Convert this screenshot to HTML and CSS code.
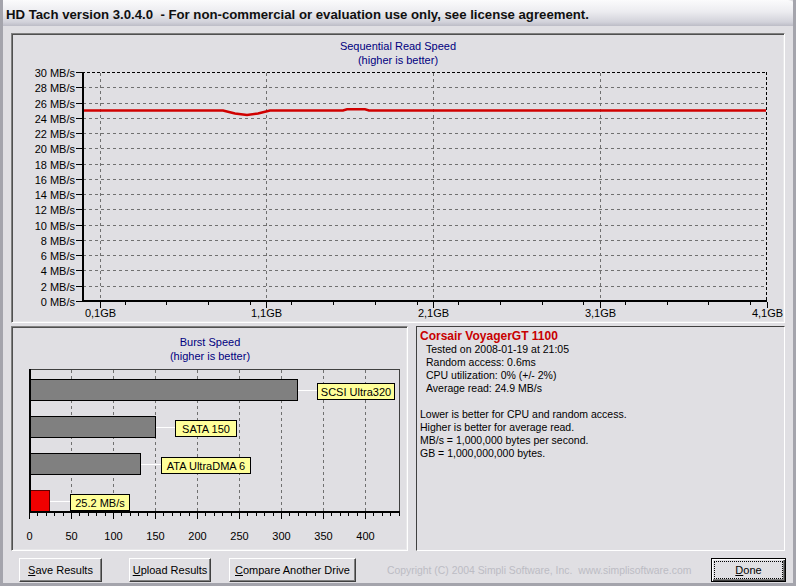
FILE: index.html
```html
<!DOCTYPE html>
<html lang="en">
<head>
    <meta charset="UTF-8">
    <title>HD Tach</title>
    <link rel="stylesheet" href="styles.css">
</head>
<body>
<div class="window">
    <div class="titlebar">HD Tach version 3.0.4.0 &nbsp;- For non-commercial or evaluation use only, see license agreement.</div>
    <div class="client">

        <div class="panel seq">
            <svg width="770" height="286" viewBox="0 0 770 286">
                <text class="ctitle" x="385" y="15">Sequential Read Speed</text>
                <text class="ctitle" x="385" y="29">(higher is better)</text>
                <g id="seq-grid"></g>
                <g id="seq-labels" class="axis"></g>
                <polyline class="readline" points="69,75.5 210,75.5 222,78.5 234,80 245,78.5 257,75.5 330,75.5 334,74.3 352,74.3 356,75.5 753,75.5"/>
                <line class="frame-top" x1="69" y1="37.5" x2="753" y2="37.5"/>
                <line class="frame-top" x1="753.5" y1="37" x2="753.5" y2="266"/>
                <line class="axisline" x1="70" y1="37" x2="70" y2="267"/>
                <line class="axisline" x1="69" y1="266" x2="754" y2="266"/>
            </svg>
        </div>

        <div class="row">
            <div class="panel burst">
                <svg width="393" height="221" viewBox="0 0 393 221">
                    <text class="ctitle" x="197" y="18">Burst Speed</text>
                    <text class="ctitle" x="197" y="32">(higher is better)</text>
                    <g id="burst-grid"></g>
                    <line class="boxline" x1="16" y1="41.5" x2="386" y2="41.5"/>
                    <line class="boxline" x1="386.5" y1="41" x2="386.5" y2="184"/>

                    <rect class="bar" x="16.5" y="51.5" width="268" height="21"/>
                    <line class="link" x1="285" y1="62.5" x2="304" y2="62.5"/>
                    <rect class="tag" x="304.5" y="55.5" width="77" height="16"/>
                    <text class="tagtext" x="343" y="67.5">SCSI Ultra320</text>

                    <rect class="bar" x="16.5" y="88.5" width="126" height="21"/>
                    <line class="link" x1="143" y1="99.5" x2="162" y2="99.5"/>
                    <rect class="tag" x="162.5" y="92.5" width="61" height="16"/>
                    <text class="tagtext" x="193" y="104.5">SATA 150</text>

                    <rect class="bar" x="16.5" y="125.5" width="111" height="21"/>
                    <line class="link" x1="128" y1="136.5" x2="148" y2="136.5"/>
                    <rect class="tag" x="148.5" y="129.5" width="89" height="16"/>
                    <text class="tagtext" x="193" y="141.5">ATA UltraDMA 6</text>

                    <rect class="bar mine" x="16.5" y="162.5" width="20" height="21"/>
                    <line class="link" x1="37" y1="173.5" x2="57" y2="173.5"/>
                    <rect class="tag" x="57.5" y="166.5" width="59" height="16"/>
                    <text class="tagtext" x="87" y="178.5">25.2 MB/s</text>

                    <line class="axisline" x1="17" y1="41" x2="17" y2="185"/>
                    <line class="axisline" x1="16" y1="184" x2="387" y2="184"/>
                    <g id="burst-labels" class="axis"></g>
                </svg>
            </div>

            <div class="panel info">
                <div class="drive">Corsair VoyagerGT 1100</div>
                <div class="indent">Tested on 2008-01-19 at 21:05</div>
                <div class="indent">Random access: 0.6ms</div>
                <div class="indent">CPU utilization: 0% (+/- 2%)</div>
                <div class="indent">Average read: 24.9 MB/s</div>
                <div>&nbsp;</div>
                <div>Lower is better for CPU and random access.</div>
                <div>Higher is better for average read.</div>
                <div>MB/s = 1,000,000 bytes per second.</div>
                <div>GB = 1,000,000,000 bytes.</div>
            </div>
        </div>

        <div class="buttons">
            <button class="btn save"><u>S</u>ave Results</button>
            <button class="btn upload"><u>U</u>pload Results</button>
            <button class="btn compare"><u>C</u>ompare Another Drive</button>
            <span class="copyright">Copyright (C) 2004 Simpli Software, Inc.&nbsp; www.simplisoftware.com</span>
            <button class="btn done"><span class="focus"><u>D</u>one</span></button>
        </div>
    </div>
</div>

<script>
    const NS = 'http://www.w3.org/2000/svg';

    function add(parent, tag, attrs, text) {
        const el = document.createElementNS(NS, tag);
        for (const k in attrs) el.setAttribute(k, attrs[k]);
        if (text) el.textContent = text;
        parent.appendChild(el);
        return el;
    }

    // sequential read chart
    const seqGrid = document.getElementById('seq-grid');
    const seqLabels = document.getElementById('seq-labels');
    for (let i = 0; i <= 15; i++) {
        const y = Math.round(37 + i * 229 / 15) + 0.5;
        if (i > 0 && i < 15) {
            add(seqGrid, 'line', {x1: 70, y1: y, x2: 753, y2: y, class: 'grid'});
        }
        add(seqLabels, 'line', {x1: 63, y1: y, x2: 69, y2: y, class: 'tick'});
        add(seqLabels, 'text', {x: 62, y: y + 4, class: 'ylabel'}, (30 - i * 2) + ' MB/s');
    }
    const gbStep = 166.75;
    for (let k = 1; k <= 16; k++) {
        const x = Math.round(70 + k * gbStep / 4) + 0.5;
        add(seqLabels, 'line', {x1: x, y1: 267, x2: x, y2: 270, class: 'tick'});
    }
    ['0,1GB', '1,1GB', '2,1GB', '3,1GB', '4,1GB'].forEach((label, n) => {
        const x = Math.round(70 + (0.1 + n) * gbStep) + 0.5;
        if (n < 4) add(seqGrid, 'line', {x1: x, y1: 38, x2: x, y2: 266, class: 'grid'});
        add(seqLabels, 'line', {x1: x, y1: 267, x2: x, y2: 273, class: 'tick'});
        add(seqLabels, 'text', {x: x, y: 282, class: 'xlabel'}, label);
    });

    // burst speed chart
    const burstGrid = document.getElementById('burst-grid');
    const burstLabels = document.getElementById('burst-labels');
    for (let v = 0; v <= 440; v += 10) {
        const x = Math.round(16 + v * 0.84) + 0.5;
        const major = v % 50 === 0;
        add(burstLabels, 'line', {x1: x, y1: 185, x2: x, y2: major ? 191 : 188, class: 'tick'});
        if (major && v <= 400) {
            if (v > 0) add(burstGrid, 'line', {x1: x, y1: 42, x2: x, y2: 184, class: 'grid'});
            add(burstLabels, 'text', {x: x, y: 212, class: 'xlabel'}, String(v));
        }
    }
</script>
</body>
</html>
```

FILE: styles.css
```css
body {
    margin: 0;
    padding: 0;
    background-color: #e0dfe3;
    font-family: "Liberation Sans", Arial, sans-serif;
    font-size: 11px;
}
.window {
    width: 796px;
    height: 586px;
    box-sizing: border-box;
    border-left: 3px solid #a4a4ac;
    border-right: 3px solid #a4a4ac;
    border-bottom: 3px solid #a4a4ac;
    overflow: hidden;
}
.titlebar {
    height: 26px;
    margin: 0 -3px;
    padding-left: 6px;
    line-height: 29px;
    font-weight: bold;
    font-size: 13.2px;
    color: #101010;
    border-top-right-radius: 8px;
    border-top-left-radius: 3px;
    background: linear-gradient(#fbfbfc 0%, #ececf0 45%, #d2d2da 85%, #bcbcc6 100%);
}
.client {
    padding: 7px 8px 0 8px;
}
.panel {
    box-sizing: border-box;
    border: 1px solid;
    border-color: #808080 #ffffff #ffffff #808080;
    box-shadow: inset 1px 1px #505050, inset -1px -1px #e8e8ea;
}
.panel svg {
    display: block;
    margin: 1px;
}
.seq {
    height: 290px;
}
.row {
    display: flex;
    gap: 8px;
    margin-top: 3px;
    height: 225px;
}
.burst {
    width: 397px;
}
.info {
    flex: 1;
    padding: 3px 0 0 3px;
    line-height: 13px;
    font-size: 10.5px;
    border-color: #404040 #ffffff #ffffff #404040;
    box-shadow: none;
}
.info .drive {
    color: #c80000;
    font-weight: bold;
    font-size: 12px;
}
.info .indent {
    padding-left: 6px;
}

/* chart parts */
.ctitle {
    fill: #000080;
    font-size: 11px;
    text-anchor: middle;
}
.axis text {
    fill: #000;
    font-size: 11px;
}
.ylabel {
    text-anchor: end;
}
.xlabel {
    text-anchor: middle;
}
.tick {
    stroke: #000;
    stroke-width: 1;
}
.grid {
    stroke: #707070;
    stroke-width: 1;
    stroke-dasharray: 3 3;
}
.frame-top {
    stroke: #000;
    stroke-width: 1;
    stroke-dasharray: 3 2;
}
.axisline {
    stroke: #000;
    stroke-width: 2;
}
.boxline {
    stroke: #404040;
    stroke-width: 1;
}
.readline {
    fill: none;
    stroke: #d00000;
    stroke-width: 2.5;
}
.bar {
    fill: #808080;
    stroke: #000;
    stroke-width: 1;
}
.bar.mine {
    fill: #f00000;
    stroke: #600000;
}
.link {
    stroke: #ffffff;
    stroke-width: 1;
}
.tag {
    fill: #ffff99;
    stroke: #000;
    stroke-width: 1;
}
.tagtext {
    fill: #000;
    font-size: 11px;
    text-anchor: middle;
}

/* button bar */
.buttons {
    display: flex;
    align-items: center;
    height: 35px;
    padding-left: 8px;
}
.btn {
    height: 24px;
    margin-top: 2px;
    padding: 0;
    font-family: "Liberation Sans", Arial, sans-serif;
    font-size: 11px;
    color: #000;
    background-color: #e0dfe3;
    border: 1px solid;
    border-color: #ffffff #404040 #404040 #ffffff;
    box-shadow: inset -1px -1px #808080;
}
.save {
    width: 83px;
}
.upload {
    width: 82px;
    margin-left: 27px;
}
.compare {
    width: 127px;
    margin-left: 18px;
}
.copyright {
    margin-left: 31px;
    margin-top: 3px;
    color: #bcbcc4;
    font-size: 10.4px;
}
.done {
    width: 75px;
    margin-left: auto;
    margin-right: -1px;
    padding: 2px;
    border: 1px solid #000;
    box-shadow: inset 1px 1px #ffffff, inset -1px -1px #404040, inset -2px -2px #808080;
}
.done .focus {
    display: block;
    height: 100%;
    box-sizing: border-box;
    line-height: 16px;
    border: 1px dotted #000;
}
```
